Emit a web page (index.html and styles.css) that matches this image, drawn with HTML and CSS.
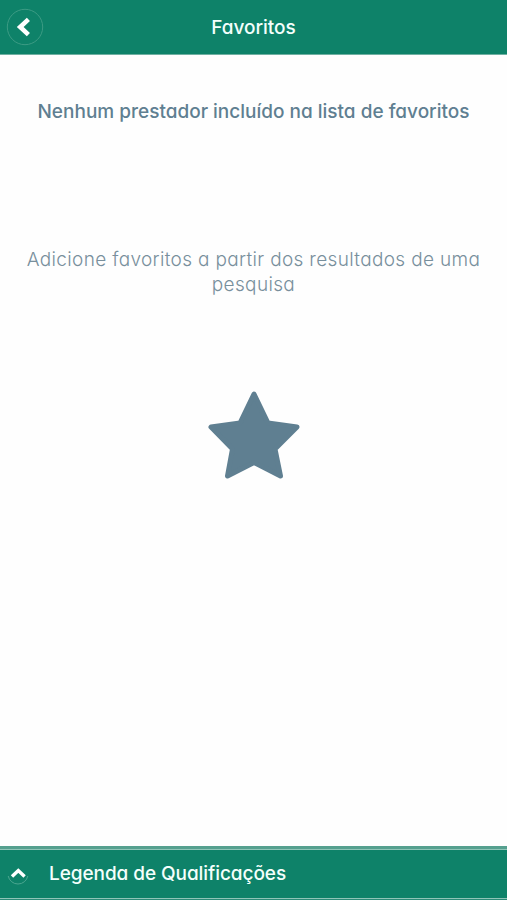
FILE: index.html
```
<!DOCTYPE html>
<html lang="pt-BR">
<head>
    <meta charset="UTF-8">
    <meta name="viewport" content="width=device-width, initial-scale=1.0">
    <title>Favoritos</title>
    <link rel="stylesheet" href="styles.css">
</head>
<body>
    <header class="header">
        <button class="back" aria-label="Voltar">
            <svg viewBox="0 0 38 38">
                <circle cx="19" cy="19" r="17.7" />
                <path d="M22.4 11.4 L14.2 19 L22.4 26.6" />
            </svg>
        </button>
        <h1>Favoritos</h1>
    </header>

    <main class="content">
        <h2>Nenhum prestador incluído na lista de favoritos</h2>
        <p><span>Adicione favoritos a partir dos resultados de uma</span> <span>pesquisa</span></p>
        <svg class="star" viewBox="0 0 92 88">
            <path d="M46 3 L60 32 L89 36 L67 58 L72.5 85 L46 71.5 L19.5 85 L24.5 58 L3 36 L32 32 Z" />
        </svg>
    </main>

    <footer class="legend">
        <svg class="legend-icon" viewBox="0 0 22 22">
            <path class="ring" d="M1.2 13 A10 10 0 0 0 20.8 13" />
            <path class="arrow" d="M5 13.6 L11.3 7.6 L17.6 13.6" />
        </svg>
        <span class="legend-text">Legenda de Qualificações</span>
    </footer>
</body>
</html>
```

FILE: styles.css
```
* {
    box-sizing: border-box;
}

body {
    margin: 0;
    height: 100vh;
    display: flex;
    flex-direction: column;
    background-color: #fefefe;
    color: #5f7f91;
    font-family: Inter, "Open Sans", sans-serif;
    font-feature-settings: "cv11";
}

h1, h2, p {
    margin: 0;
    font-weight: 400;
    white-space: nowrap;
}

.header {
    display: grid;
    grid-template-columns: 46px 1fr 46px;
    align-items: center;
    height: 55px;
    background-color: #0e8269;
    border-bottom: 1px solid #6fb0a2;
    color: #f4fffc;
}

.header h1 {
    font-size: 19px;
    font-weight: 500;
    text-align: center;
}

.back {
    width: 38px;
    height: 38px;
    margin-left: 6px;
    padding: 0;
    background: none;
    border: none;
}

.back svg {
    display: block;
    fill: none;
}

.back circle {
    stroke: #3c9b84;
    stroke-width: 1;
}

.back path {
    stroke: #fff;
    stroke-width: 4.6;
}

.content {
    flex: 1;
    display: flex;
    flex-direction: column;
    align-items: center;
    text-align: center;
}

.content h2 {
    margin-top: 44px;
    font-size: 19px;
    line-height: 26px;
    font-weight: 500;
}

.content p {
    margin-top: 122px;
    font-size: 19px;
    line-height: 25px;
    font-weight: 300;
    letter-spacing: 0.34px;
    color: #788f9c;
}

.content p span {
    display: block;
}

.star {
    width: 92px;
    height: 88px;
    margin-top: 94px;
}

.star path {
    fill: #5f7f91;
    stroke: #5f7f91;
    stroke-width: 5;
    stroke-linejoin: round;
}

.legend {
    display: flex;
    align-items: center;
    height: 54px;
    padding-left: 7px;
    background-color: #0e8269;
    border-top: 2px solid #55a08f;
    border-bottom: 1px solid #2b8b77;
    box-shadow: inset 0 1px #55a08f, inset 0 2px #8fc5b8, inset 0 -1px #8fc5b8;
    color: #f4fffc;
}

.legend-icon {
    width: 22px;
    height: 22px;
    fill: none;
}

.legend-icon .ring {
    stroke: #4ba690;
    stroke-width: 1;
}

.legend-icon .arrow {
    stroke: #fff;
    stroke-width: 3.4;
}

.legend-text {
    margin-left: 20px;
    font-size: 19px;
    font-weight: 500;
    letter-spacing: -0.07px;
    white-space: nowrap;
}
```
